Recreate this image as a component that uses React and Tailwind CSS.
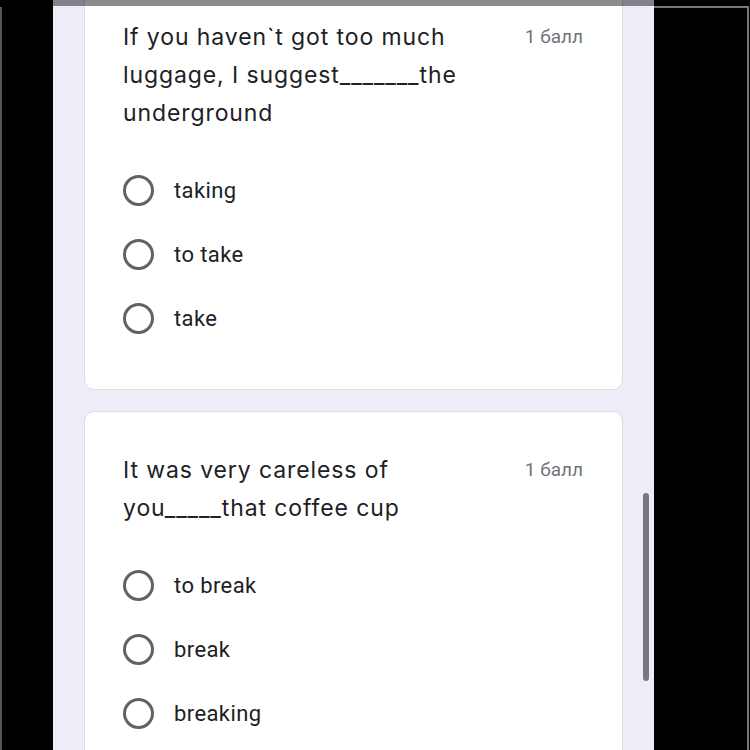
import React from 'react';

const questions = [
    {
        lines: ['If you haven`t got too much', 'luggage, I suggest_______the', 'underground'],
        options: ['taking', 'to take', 'take'],
    },
    {
        lines: ['It was very careless of', 'you_____that coffee cup'],
        options: ['to break', 'break', 'breaking'],
    },
];

function Radio() {
    return <span className="w-[31px] h-[31px] rounded-full border-[3px] border-[#5f6368] shrink-0" />;
}

function QuestionCard({ q }) {
    return (
        <div className="bg-white rounded-[10px] border border-[#dadce0] pt-[39px] pb-[39px] pl-[38px] pr-[39px]">
            <div className="flex justify-between items-start">
                <p className="text-[23px] leading-[38px] text-[#202124] tracking-[0.9px]" style={{ fontFamily: 'Inter, "Noto Sans", sans-serif' }}>
                    {q.lines.map((l, i) => (
                        <span key={i} className="block">{l}</span>
                    ))}
                </p>
                <span className="text-[19px] leading-[38px] text-[#70757a]" style={{ fontFamily: 'Roboto, sans-serif' }}>
                    1 балл
                </span>
            </div>
            <div className="mt-[26px]">
                {q.options.map(o => (
                    <div key={o} className="h-16 flex items-center gap-[20px]">
                        <Radio />
                        <span className="text-[22px] tracking-[0.4px] text-[#202124]" style={{ fontFamily: 'Roboto, sans-serif' }}>{o}</span>
                    </div>
                ))}
            </div>
        </div>
    );
}

export default function App() {
    return (
        <div className="relative h-[750px] w-[750px] bg-black overflow-hidden flex">
            {/* top status strip */}
            <div className="absolute top-0 left-[53px] w-[601px] h-[6px] bg-black/45 z-10" />
            <div className="absolute top-[6px] left-[654px] right-[2px] h-[2px] bg-[#777]" />
            <div className="absolute top-[6px] right-[1px] bottom-0 w-[2px] bg-[#777]" />
            <div className="absolute top-[7px] left-0 bottom-0 w-[2px] bg-[#555]" />

            <div className="ml-[53px] w-[601px] h-full bg-[#efebf7] relative">
                <div className="px-[31px] -mt-[22px] flex flex-col gap-[21px]">
                    {questions.map((q, i) => (
                        <QuestionCard key={i} q={q} />
                    ))}
                </div>
                {/* scrollbar */}
                <div className="absolute left-[590px] top-[493px] w-[6px] h-[188px] rounded-full bg-[#7b7782]" />
            </div>
        </div>
    );
}
